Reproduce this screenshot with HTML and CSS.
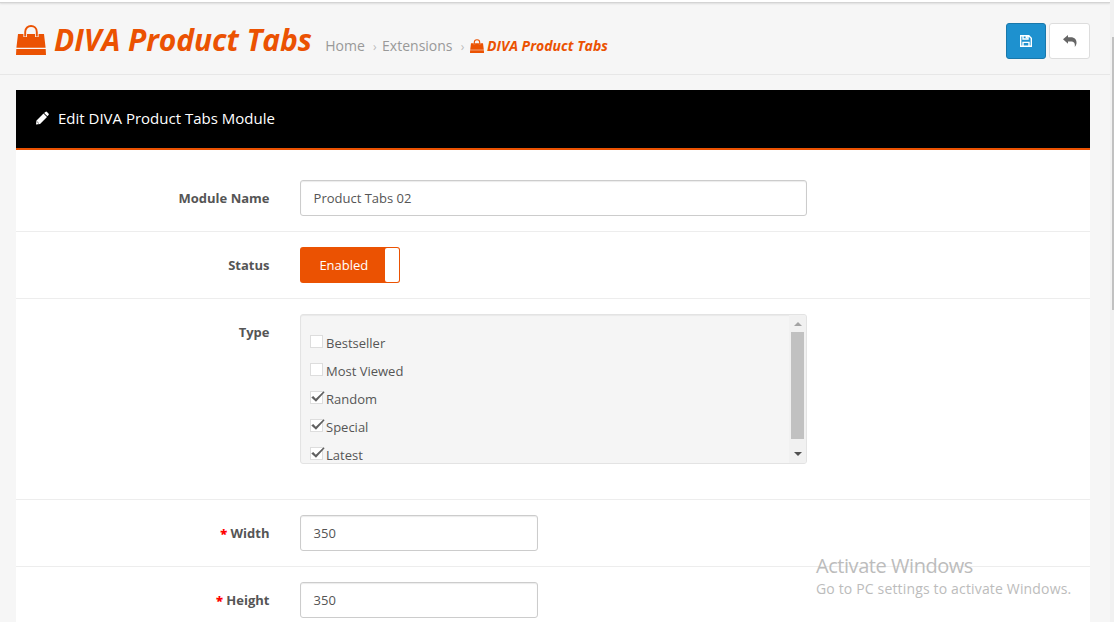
FILE: index.html
```html
<!DOCTYPE html>
<html lang="en">
<head>
<meta charset="utf-8">
<title>DIVA Product Tabs</title>
<link rel="stylesheet" href="styles.css">
</head>
<body>
<svg class="defs" aria-hidden="true">
  <symbol id="bag" viewBox="0 0 30 30">
    <path d="M2 9H28L29.6 22.8H.4ZM.3 24H29.7L30 30H0Z" fill="currentColor"/>
    <path d="M9.2 12V7C9.2-1 20.8-1 20.8 7V12" fill="none" stroke="#f5f5f5" stroke-width="3.6"/>
    <path d="M9.2 11.5V7C9.2-1 20.8-1 20.8 7V11.5" fill="none" stroke="currentColor" stroke-width="1.9"/>
  </symbol>
  <symbol id="bag-bold" viewBox="0 0 14 14">
    <path d="M1 4.2H13L13.8 10.7H.2ZM.1 11.3H13.9L14 14H0Z" fill="currentColor"/>
    <path d="M4.3 5.6V3.4C4.3-.2 9.7-.2 9.7 3.4V5.6" fill="none" stroke="#f5f5f5" stroke-width="1.7" stroke-opacity=".5"/>
    <path d="M4.3 5.4V3.4C4.3-.2 9.7-.2 9.7 3.4V5.4" fill="none" stroke="currentColor" stroke-width="1.1"/>
  </symbol>
  <symbol id="tick" viewBox="0 0 16 14">
    <path d="M1.3 6.6 3.2 5 5.8 7.7 13.6.2 14.6 1.2 6 10.7Z" fill="#606060"/>
  </symbol>
</svg>
<div class="window">
  <div class="page">
    <div class="topbar"></div>
    <header class="header">
      <h1 class="title"><svg class="bag-large"><use href="#bag"/></svg><span>DIVA Product Tabs</span></h1>
      <nav class="crumbs">
        <a class="home">Home</a><i class="sep">›</i><a class="ext">Extensions</a><i class="sep">›</i>
        <a class="current"><svg class="bag-small"><use href="#bag-bold"/></svg><span>DIVA Product Tabs</span></a>
      </nav>
      <div class="actions">
        <button class="btn save" aria-label="Save"><svg width="12" height="12" viewBox="0 0 12 12"><path d="M.7.7H8.8L11.3 3.2V11.3H.7ZM3 .6V4H8V.6M3 11V7.4H9V11" fill="none" stroke="#fff" stroke-width="1.4"/><path d="M5.6.6H7.4V3.2H5.6Z" fill="#fff"/></svg></button>
        <button class="btn back" aria-label="Back"><svg width="14" height="12" viewBox="0 0 14 12"><path d="M0 4.3 5 0V2.3H7.5C12 2.3 13.9 5 13.5 8.5Q13.2 10.4 11.8 12C12.2 8.4 11.2 6.6 7.5 6.6H5V8.8Z" fill="#666"/></svg></button>
      </div>
    </header>
    <main class="panel">
      <div class="panel-head">
        <svg width="14" height="14" viewBox="0 0 14 14"><path d="M9.1 2 10.4.9Q11.2.2 12 .9L13.5 2.4Q14.2 3.2 13.5 4L12.4 5.2ZM8.5 2.5 12 6 5 13 1 13.6 1.5 9.5Z" fill="#fff"/><path d="M2.4 11 3.6 12.2" stroke="#000" stroke-width=".9"/></svg>
        <h2>Edit DIVA Product Tabs Module</h2>
      </div>
      <form class="form">
        <div class="row"><label>Module Name</label><div class="field wide">Product Tabs 02</div></div>
        <div class="row"><label>Status</label><div class="toggle"><span>Enabled</span><i></i></div></div>
        <div class="row type"><label>Type</label>
          <div class="well">
            <div class="options">
              <div class="option"><i class="box"></i>Bestseller</div>
              <div class="option"><i class="box"></i>Most Viewed</div>
              <div class="option"><i class="box"><svg><use href="#tick"/></svg></i>Random</div>
              <div class="option"><i class="box"><svg><use href="#tick"/></svg></i>Special</div>
              <div class="option"><i class="box"><svg><use href="#tick"/></svg></i>Latest</div>
            </div>
            <div class="scroll"><i class="up"></i><i class="thumb"></i><i class="down"></i></div>
          </div>
        </div>
        <div class="row"><label><b>*</b> Width</label><div class="field narrow">350</div></div>
        <div class="row"><label><b>*</b> Height</label><div class="field narrow">350</div></div>
      </form>
    </main>
  </div>
  <div class="page-scroll"><i></i></div>
</div>
<aside class="watermark"><p class="wm-title">Activate Windows</p><p class="wm-text">Go to PC settings to activate Windows.</p></aside>
</body>
</html>
```
FILE: styles.css
```css
* { box-sizing: border-box; }
body { margin: 0; height: 622px; overflow: hidden; background: #f6f6f6; color: #555; font: 13px/20px "Open Sans", sans-serif; }
h1, h2, p { margin: 0; }
.defs { position: absolute; width: 0; height: 0; }
.window { display: flex; height: 622px; }
.page { width: 1110px; height: 622px; overflow: hidden; }
.topbar { height: 3px; background: #fff; border-bottom: 1px solid #d4d4d4; box-shadow: 0 1px 2px #ddd; }
.header { display: flex; align-items: flex-start; height: 72px; padding: 0 20px 0 16px; border-bottom: 1px solid #e7e7e7; }
.title { display: flex; width: 309px; color: #eb5202; font-size: 30px; line-height: 40px; font-weight: 700; font-style: italic; letter-spacing: -.06px; white-space: nowrap; padding-top: 17px; }
.title span { margin-left: 8px; }
.bag-large { width: 30px; height: 30px; margin-top: 5px; flex: none; }
.crumbs { display: flex; padding-top: 33px; color: #999; font-size: 14px; white-space: nowrap; }
.home { width: 42px; }
.ext { width: 73px; }
.home, .ext { padding-left: .3px; }
.sep { width: 14.8px; padding-left: 6px; font-style: normal; font-size: 12px; color: #bbb; line-height: 22px; }
.current { display: flex; color: #eb5202; font-weight: 700; font-style: italic; }
.bag-small { width: 14px; height: 14px; margin: 3px 3.4px 0 0; }
.actions { display: flex; gap: 3px; margin-left: auto; padding-top: 20px; }
.btn { display: flex; align-items: center; justify-content: center; height: 36px; padding: 0; border-radius: 3px; }
.save { width: 40px; background: #1e91cf; border: 1px solid #1978ab; }
.back { width: 41px; background: #fff; border: 1px solid #ddd; }
.panel { margin: 15px 20px 0 16px; background: #fff; }
.panel-head { display: flex; align-items: center; gap: 9px; height: 60px; padding: 0 19px 2px; background: #000; border-bottom: 2px solid #eb5202; }
.panel-head h2 { color: #fff; font-size: 15px; font-weight: 400; line-height: 20px; }
.form { padding-top: 15px; }
.row { display: flex; height: 67px; padding: 15px 0; border-bottom: 1px solid #ededed; }
.type { height: 201px; }
.row label { width: 253.5px; margin-right: 30.5px; padding-top: 8px; text-align: right; font-weight: 700; }
.row label b { color: #f00; }
.field { height: 36px; padding: 7px 12.6px; border: 1px solid #ccc; border-radius: 3px; box-shadow: inset 0 1px 1px rgba(0,0,0,.08); background: #fff; }
.wide { width: 507px; }
.narrow { width: 238px; }
.toggle { display: flex; justify-content: space-between; width: 100px; height: 36px; padding: 1px 1px 1px 19.4px; border-radius: 3px; background: #eb5202; color: #fff; line-height: 34px; }
.toggle i { width: 14px; border-radius: 2px; background: #fff; }
.well { display: flex; width: 507px; height: 150px; overflow: hidden; border: 1px solid #e3e3e3; border-radius: 3px; background: #f5f5f5; box-shadow: inset 0 1px 1px rgba(0,0,0,.05); }
.options { width: 488px; padding: 14px 0 0 9px; }
.option { display: flex; height: 28px; line-height: 28px; }
.box { width: 13px; height: 13px; margin: 6px 3px 0 0; border: 1px solid #ddd; background: #fff; }
.box svg { display: block; width: 16px; height: 14px; margin: -1px; overflow: visible; }
.scroll { width: 17px; background: #f1f1f1; display: flex; flex-direction: column; align-items: center; }
.up { margin-top: 7px; border: 4px solid transparent; border-top: 0; border-bottom-color: #a3a3a3; }
.thumb { width: 13px; height: 107px; margin: 6px 0 13px; background: #c1c1c1; }
.down { border: 4px solid transparent; border-bottom: 0; border-top-color: #505050; }
.page-scroll { width: 4px; padding: 37px 0 0 2px; background: #f1f1f1; }
.page-scroll i { display: block; height: 273px; background: #c1c1c1; }
.watermark { position: absolute; left: 816px; top: 554px; color: #bcbcbc; white-space: nowrap; }
.wm-title { font-size: 20px; line-height: 24px; letter-spacing: -.45px; }
.wm-text { font-size: 14px; line-height: 21px; letter-spacing: .16px; }
```
